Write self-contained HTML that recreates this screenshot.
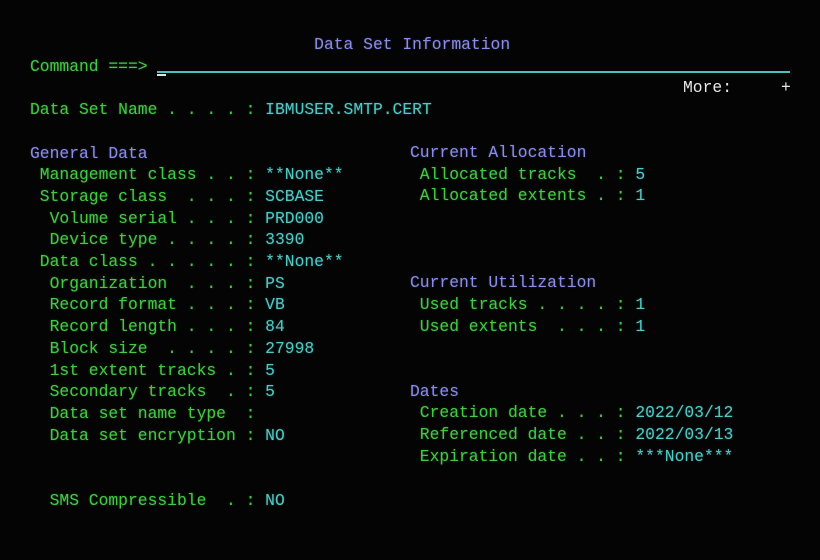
<!DOCTYPE html>
<html><head><meta charset="utf-8">
<style>
html,body{margin:0;padding:0;background:#040404;width:820px;height:560px;overflow:hidden}
pre{position:absolute;margin:0;font-family:"Liberation Mono",monospace;font-size:16.33px;line-height:21.7px;color:#45c945;text-shadow:0 0 2px rgba(80,220,80,0.35)}
.t{color:#52c9c4;text-shadow:0 0 2px rgba(80,210,210,0.35)}
.b{color:#8a8de6;text-shadow:0 0 2px rgba(130,130,240,0.35)}
.w{color:#e6e6e6;text-shadow:none}
.line{position:absolute;left:157px;top:71px;width:633px;height:2px;background:#4cc2bf}
.cur{position:absolute;left:157px;top:74px;width:9px;height:2px;background:#e0e0e0}
</style></head><body>
<div class="line"></div><div class="cur"></div>
<pre style="left:30px;top:34px"><span class="b">                             Data Set Information</span>
Command ===&gt;

Data Set Name . . . . : <span class="t">IBMUSER.SMTP.CERT</span>

<span class="b">General Data</span>
 Management class . . : <span class="t">**None**</span>
 Storage class  . . . : <span class="t">SCBASE</span>
  Volume serial . . . : <span class="t">PRD000</span>
  Device type . . . . : <span class="t">3390</span>
 Data class . . . . . : <span class="t">**None**</span>
  Organization  . . . : <span class="t">PS</span>
  Record format . . . : <span class="t">VB</span>
  Record length . . . : <span class="t">84</span>
  Block size  . . . . : <span class="t">27998</span>
  1st extent tracks . : <span class="t">5</span>
  Secondary tracks  . : <span class="t">5</span>
  Data set name type  :
  Data set encryption : <span class="t">NO</span>


  SMS Compressible  . : <span class="t">NO</span></pre>
<pre style="left:683px;top:77px" class="w">More:</pre>
<pre style="left:781px;top:77px" class="w">+</pre>
<pre style="left:410px;top:142px"><span class="b">Current Allocation</span>
 Allocated tracks  . : <span class="t">5</span>
 Allocated extents . : <span class="t">1</span>



<span class="b">Current Utilization</span>
 Used tracks . . . . : <span class="t">1</span>
 Used extents  . . . : <span class="t">1</span>


<span class="b">Dates</span>
 Creation date . . . : <span class="t">2022/03/12</span>
 Referenced date . . : <span class="t">2022/03/13</span>
 Expiration date . . : <span class="t">***None***</span></pre>
</body></html>
